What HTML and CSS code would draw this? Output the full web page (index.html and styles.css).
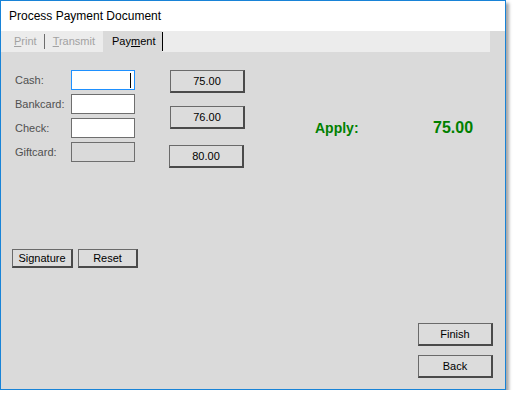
FILE: index.html
```html
<!DOCTYPE html>
<html lang="en">
<head>
    <meta charset="UTF-8">
    <title>Process Payment Document</title>
    <link rel="stylesheet" href="styles.css">
</head>
<body>
    <div class="window">
        <div class="titlebar">Process Payment Document</div>

        <div class="tabstrip">
            <div class="tabs">
                <div class="tab tab-first disabled"><u>P</u>rint</div>
                <div class="tab-sep"></div>
                <div class="tab disabled"><u>T</u>ransmit</div>
                <div class="tab active">Pay<u>m</u>ent</div>
            </div>
        </div>

        <div class="content">
            <div class="payment">
                <div class="fields">
                    <div class="row">
                        <span class="label">Cash:</span>
                        <div class="field focused"><span class="caret"></span></div>
                    </div>
                    <div class="row">
                        <span class="label">Bankcard:</span>
                        <div class="field"></div>
                    </div>
                    <div class="row">
                        <span class="label">Check:</span>
                        <div class="field"></div>
                    </div>
                    <div class="row">
                        <span class="label">Giftcard:</span>
                        <div class="field disabled-field"></div>
                    </div>
                </div>

                <div class="amounts">
                    <button class="btn btn-amount">75.00</button>
                    <button class="btn btn-amount">76.00</button>
                    <button class="btn btn-amount btn-last">80.00</button>
                </div>

                <div class="apply">
                    <span class="apply-label">Apply:</span>
                    <span class="apply-value">75.00</span>
                </div>
            </div>

            <div class="actions">
                <button class="btn btn-small btn-signature">Signature</button>
                <button class="btn btn-small btn-reset">Reset</button>
            </div>

            <div class="nav">
                <button class="btn btn-nav">Finish</button>
                <button class="btn btn-nav">Back</button>
            </div>
        </div>
    </div>
</body>
</html>
```

FILE: styles.css
```css
body {
    margin: 0;
    background: #fff;
    font-family: 'Liberation Sans', Arial, sans-serif;
    font-size: 11px;
    color: #000;
}
.window {
    width: 506px;
    height: 390px;
    box-sizing: border-box;
    border: 1px solid #1883d7;
    background: #dadada;
    display: flex;
    flex-direction: column;
    box-shadow: 3px 3px 3px rgba(0, 0, 0, 0.35);
}
.titlebar {
    height: 30px;
    background: #fff;
    padding-left: 8px;
    display: flex;
    align-items: center;
    font-size: 12px;
}
.tabstrip {
    height: 21px;
    display: flex;
}
.tabs {
    width: 489px;
    background: #ececec;
    display: flex;
    align-items: center;
    padding-left: 6px;
    box-sizing: border-box;
}
.tab {
    padding: 0 8px;
    line-height: 21px;
}
.tab-first { padding: 0 7px; }
.disabled { color: #a2a2a2; }
.tab-sep {
    width: 1px;
    height: 15px;
    background: #6d6d6d;
}
.tab.active {
    align-self: stretch;
    background: #dadada;
    padding: 0 7px 0 9px;
    position: relative;
}
.tab.active::after {
    content: "";
    position: absolute;
    right: -1px;
    top: 1px;
    bottom: 1px;
    width: 1px;
    background: #000;
}
.content {
    flex: 1;
    display: flex;
    flex-direction: column;
    padding: 18px 12px 0 14px;
}
.payment {
    display: flex;
    align-items: flex-start;
}
.fields {
    display: flex;
    flex-direction: column;
    gap: 4px;
}
.row {
    display: flex;
    align-items: center;
}
.label {
    width: 56px;
    color: #505050;
}
.field {
    width: 64px;
    height: 20px;
    box-sizing: border-box;
    border: 1px solid #6e6e6e;
    background: #fff;
    display: flex;
    justify-content: flex-end;
    align-items: center;
    padding-right: 3px;
}
.field.focused { border-color: #1e90ff; }
.caret {
    width: 1px;
    height: 15px;
    background: #000;
}
.disabled-field { background: #dadada; }
.amounts {
    display: flex;
    flex-direction: column;
    gap: 13px;
    margin-left: 35px;
}
.btn {
    font-family: inherit;
    font-size: 11px;
    color: #000;
    background: #dcdcdc;
    border: 1px solid #6a6a6a;
    border-right: 2px solid #4a4a4a;
    border-bottom: 2px solid #4a4a4a;
    padding: 0;
    box-sizing: border-box;
    cursor: pointer;
}
.btn-amount {
    width: 75px;
    height: 23px;
}
.btn-last {
    margin-top: 3px;
    margin-left: -1px;
}
.apply {
    display: flex;
    align-items: baseline;
    margin-left: 70px;
    margin-top: 49px;
    font-weight: bold;
    line-height: 18px;
    color: #008000;
}
.apply-label {
    width: 118px;
    font-size: 14px;
}
.apply-value { font-size: 16px; }
.actions {
    display: flex;
    gap: 5px;
    margin-top: 81px;
    margin-left: -3px;
}
.btn-small { height: 19px; }
.btn-signature { width: 61px; }
.btn-reset { width: 60px; }
.nav {
    display: flex;
    flex-direction: column;
    align-items: flex-end;
    gap: 9px;
    margin-top: 55px;
}
.btn-nav {
    width: 75px;
    height: 23px;
}
```
